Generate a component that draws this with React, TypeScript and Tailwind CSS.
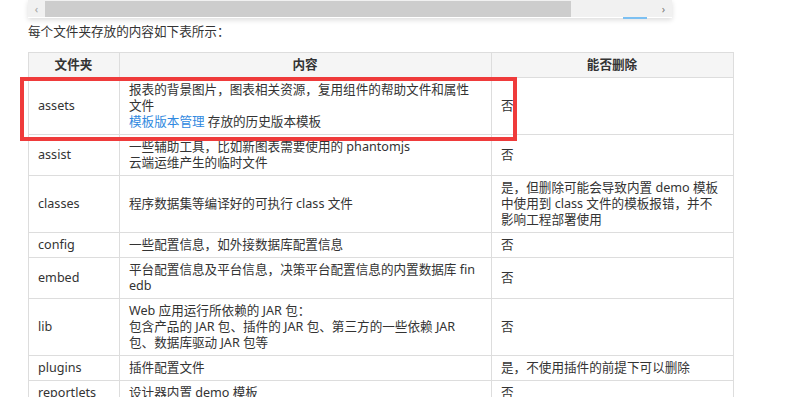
import React from 'react';

const link = 'text-[#3089e0]';

type Row = { folder: string; content: React.ReactNode; del: React.ReactNode };

const rows: Row[] = [
  {
    folder: 'assets',
    content: (
      <>
        报表的背景图片，图表相关资源，复用组件的帮助文件和属性文件
        <br />
        <a className={link}>模板版本管理</a> 存放的历史版本模板
      </>
    ),
    del: '否',
  },
  {
    folder: 'assist',
    content: (
      <>
        一些辅助工具，比如新图表需要使用的 phantomjs
        <br />
        云端运维产生的临时文件
      </>
    ),
    del: '否',
  },
  {
    folder: 'classes',
    content: '程序数据集等编译好的可执行 class 文件',
    del: '是，但删除可能会导致内置 demo 模板中使用到 class 文件的模板报错，并不影响工程部署使用',
  },
  { folder: 'config', content: '一些配置信息，如外接数据库配置信息', del: '否' },
  {
    folder: 'embed',
    content: (
      <>
        平台配置信息及平台信息，决策平台配置信息的内置数据库 fin
        <br />
        edb
      </>
    ),
    del: '否',
  },
  {
    folder: 'lib',
    content: (
      <>
        Web 应用运行所依赖的 JAR 包：
        <br />
        包含产品的 JAR 包、插件的 JAR 包、第三方的一些依赖 JAR
        <br />
        包、数据库驱动 JAR 包等
      </>
    ),
    del: '否',
  },
  { folder: 'plugins', content: '插件配置文件', del: '是，不使用插件的前提下可以删除' },
  { folder: 'reportlets', content: '设计器内置 demo 模板', del: '否' },
];

function ScrollBar() {
  return (
    <div className="relative ml-[28px] w-[644px] h-[18px] bg-white shadow-[0_2px_5px_rgba(0,0,0,0.14)]">
      <div className="flex items-center h-[17px] bg-[#f1f1f1]">
        <span className="w-[17px] text-center text-[11px] leading-none text-[#a3a3a3]">‹</span>
        <div className="h-[16px] w-[526px] bg-[#cdcdcd]" />
        <div className="flex-1" />
        <span className="w-[17px] text-center text-[11px] leading-none text-[#7a7a7a]">›</span>
      </div>
      <div className="absolute left-[595px] top-[17px] h-[2px] w-[24px] bg-[#7cc0f2]" />
    </div>
  );
}

export default function App() {
  const cell = 'border border-[#dddddd] pl-[9px] pr-[10px] py-[4px] align-middle break-all';
  return (
    <div
      className="relative w-[786px] h-[397px] overflow-hidden bg-white text-[12.6px] leading-[16px] text-[#333333]"
      style={{ fontFamily: '"Noto Sans", "Noto Sans CJK SC", sans-serif' }}
    >
      <ScrollBar />
      <p className="ml-[28px] mt-[6px]">每个文件夹存放的内容如下表所示：</p>
      <table className="ml-[28px] mt-[12px] w-[705px] table-fixed border-collapse">
        <colgroup>
          <col className="w-[91px]" />
          <col className="w-[372px]" />
          <col className="w-[242px]" />
        </colgroup>
        <thead>
          <tr className="bg-[#f5f5f5]">
            <th className={`${cell} text-center font-bold`}>文件夹</th>
            <th className={`${cell} text-center font-bold`}>内容</th>
            <th className={`${cell} text-center font-bold`}>能否删除</th>
          </tr>
        </thead>
        <tbody>
          {rows.map((r) => (
            <tr key={r.folder}>
              <td className={cell}>{r.folder}</td>
              <td className={cell}>{r.content}</td>
              <td className={cell}>{r.del}</td>
            </tr>
          ))}
        </tbody>
      </table>
      <div className="absolute left-[20px] top-[77px] w-[497px] h-[64px] border-4 border-[#ef3b3b]" />
    </div>
  );
}
